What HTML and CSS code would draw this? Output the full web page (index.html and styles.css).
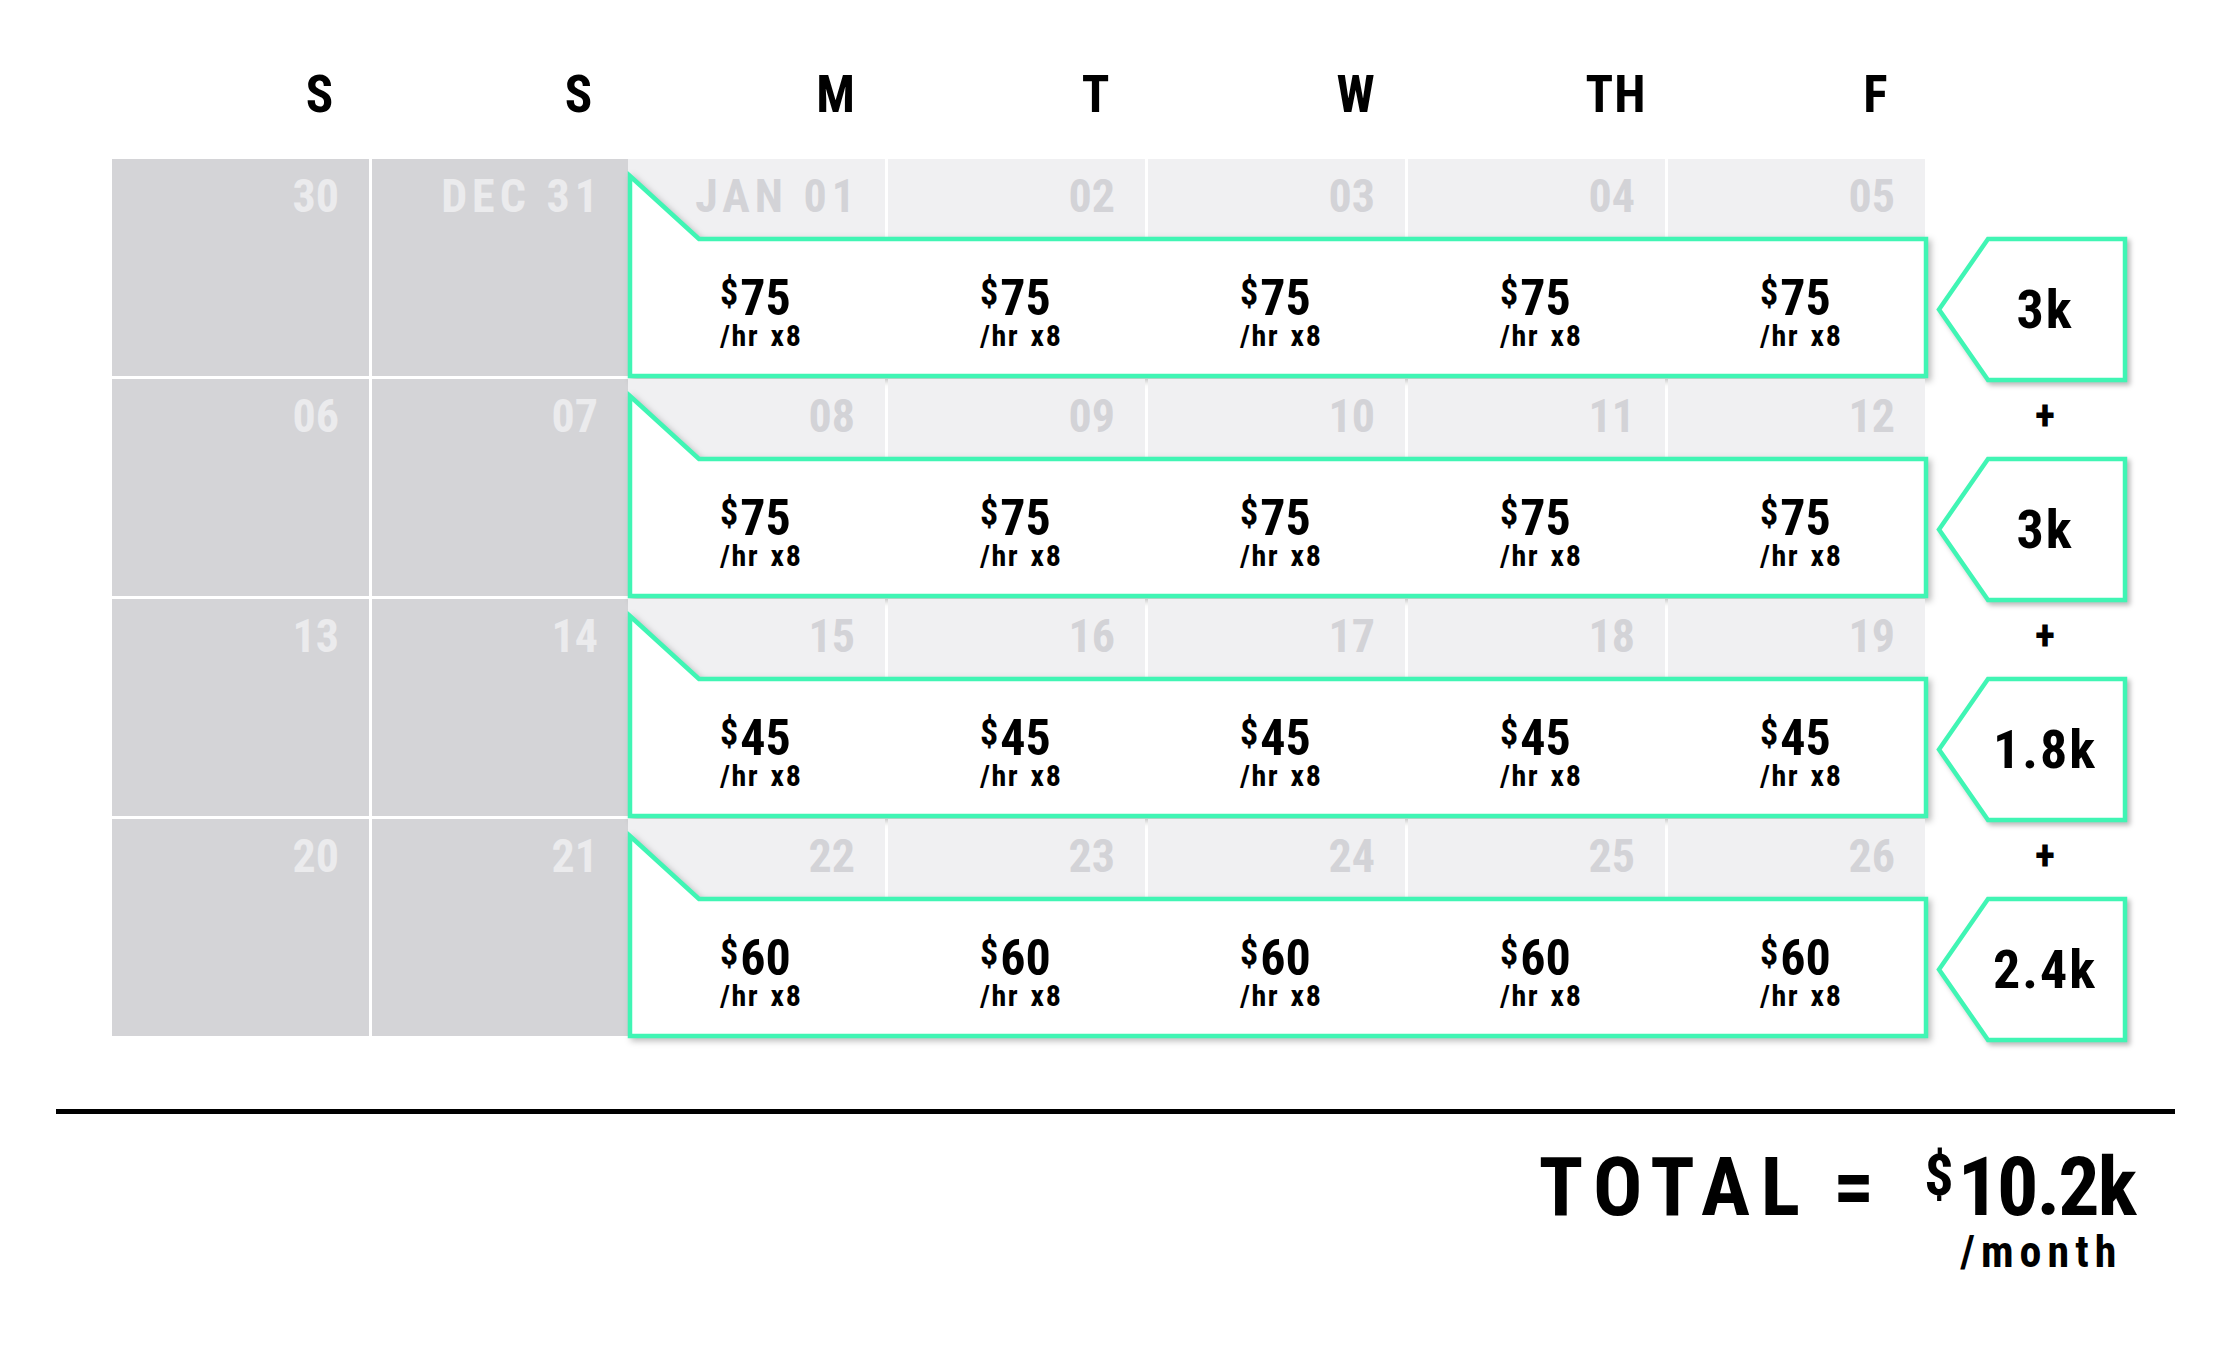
FILE: index.html
```html
<!DOCTYPE html>
<html lang="en">
<head>
<meta charset="utf-8">
<title>Monthly rate calendar</title>
<link rel="stylesheet" href="styles.css">
</head>
<body>
<div class="page">
  <div class="days">
    <div class="day we1"><span>S</span></div>
    <div class="day we2"><span>S</span></div>
    <div class="wk-head">
      <div class="day"><span>M</span></div>
      <div class="day"><span>T</span></div>
      <div class="day"><span>W</span></div>
      <div class="day"><span>TH</span></div>
      <div class="day"><span>F</span></div>
    </div>
  </div>

  <div class="weeks">
    <!-- week 1 -->
    <div class="week">
      <div class="cell weekend we1"><span class="date">30</span></div>
      <div class="cell weekend we2"><span class="date month">DEC 31</span></div>
      <div class="workdays">
        <div class="cell weekday"><span class="date month">JAN 01</span></div>
        <div class="cell weekday"><span class="date">02</span></div>
        <div class="cell weekday"><span class="date">03</span></div>
        <div class="cell weekday"><span class="date">04</span></div>
        <div class="cell weekday"><span class="date">05</span></div>
        <div class="banner">
          <svg class="banner-bg" viewBox="0 0 1300 204" preserveAspectRatio="none"><polygon points="2,2 71,65 1298,65 1298,202 2,202"/></svg>
          <div class="prices">
            <div class="price"><div class="amt"><span class="cur">$</span>75</div><div class="rate">/hr x8</div></div>
            <div class="price"><div class="amt"><span class="cur">$</span>75</div><div class="rate">/hr x8</div></div>
            <div class="price"><div class="amt"><span class="cur">$</span>75</div><div class="rate">/hr x8</div></div>
            <div class="price"><div class="amt"><span class="cur">$</span>75</div><div class="rate">/hr x8</div></div>
            <div class="price"><div class="amt"><span class="cur">$</span>75</div><div class="rate">/hr x8</div></div>
          </div>
        </div>
      </div>
      <div class="sum">
        <div class="plus blank">+</div>
        <div class="tag"><svg class="tag-bg" viewBox="0 0 190 145"><polygon points="2,72.5 51,2 188,2 188,143 51,143"/></svg><span class="tag-val">3k</span></div>
      </div>
    </div>

    <!-- week 2 -->
    <div class="week">
      <div class="cell weekend we1"><span class="date">06</span></div>
      <div class="cell weekend we2"><span class="date">07</span></div>
      <div class="workdays">
        <div class="cell weekday"><span class="date">08</span></div>
        <div class="cell weekday"><span class="date">09</span></div>
        <div class="cell weekday"><span class="date">10</span></div>
        <div class="cell weekday"><span class="date">11</span></div>
        <div class="cell weekday"><span class="date">12</span></div>
        <div class="banner">
          <svg class="banner-bg" viewBox="0 0 1300 204" preserveAspectRatio="none"><polygon points="2,2 71,65 1298,65 1298,202 2,202"/></svg>
          <div class="prices">
            <div class="price"><div class="amt"><span class="cur">$</span>75</div><div class="rate">/hr x8</div></div>
            <div class="price"><div class="amt"><span class="cur">$</span>75</div><div class="rate">/hr x8</div></div>
            <div class="price"><div class="amt"><span class="cur">$</span>75</div><div class="rate">/hr x8</div></div>
            <div class="price"><div class="amt"><span class="cur">$</span>75</div><div class="rate">/hr x8</div></div>
            <div class="price"><div class="amt"><span class="cur">$</span>75</div><div class="rate">/hr x8</div></div>
          </div>
        </div>
      </div>
      <div class="sum">
        <div class="plus">+</div>
        <div class="tag"><svg class="tag-bg" viewBox="0 0 190 145"><polygon points="2,72.5 51,2 188,2 188,143 51,143"/></svg><span class="tag-val">3k</span></div>
      </div>
    </div>

    <!-- week 3 -->
    <div class="week">
      <div class="cell weekend we1"><span class="date">13</span></div>
      <div class="cell weekend we2"><span class="date">14</span></div>
      <div class="workdays">
        <div class="cell weekday"><span class="date">15</span></div>
        <div class="cell weekday"><span class="date">16</span></div>
        <div class="cell weekday"><span class="date">17</span></div>
        <div class="cell weekday"><span class="date">18</span></div>
        <div class="cell weekday"><span class="date">19</span></div>
        <div class="banner">
          <svg class="banner-bg" viewBox="0 0 1300 204" preserveAspectRatio="none"><polygon points="2,2 71,65 1298,65 1298,202 2,202"/></svg>
          <div class="prices">
            <div class="price"><div class="amt"><span class="cur">$</span>45</div><div class="rate">/hr x8</div></div>
            <div class="price"><div class="amt"><span class="cur">$</span>45</div><div class="rate">/hr x8</div></div>
            <div class="price"><div class="amt"><span class="cur">$</span>45</div><div class="rate">/hr x8</div></div>
            <div class="price"><div class="amt"><span class="cur">$</span>45</div><div class="rate">/hr x8</div></div>
            <div class="price"><div class="amt"><span class="cur">$</span>45</div><div class="rate">/hr x8</div></div>
          </div>
        </div>
      </div>
      <div class="sum">
        <div class="plus">+</div>
        <div class="tag"><svg class="tag-bg" viewBox="0 0 190 145"><polygon points="2,72.5 51,2 188,2 188,143 51,143"/></svg><span class="tag-val">1.8k</span></div>
      </div>
    </div>

    <!-- week 4 -->
    <div class="week">
      <div class="cell weekend we1"><span class="date">20</span></div>
      <div class="cell weekend we2"><span class="date">21</span></div>
      <div class="workdays">
        <div class="cell weekday"><span class="date">22</span></div>
        <div class="cell weekday"><span class="date">23</span></div>
        <div class="cell weekday"><span class="date">24</span></div>
        <div class="cell weekday"><span class="date">25</span></div>
        <div class="cell weekday"><span class="date">26</span></div>
        <div class="banner">
          <svg class="banner-bg" viewBox="0 0 1300 204" preserveAspectRatio="none"><polygon points="2,2 71,65 1298,65 1298,202 2,202"/></svg>
          <div class="prices">
            <div class="price"><div class="amt"><span class="cur">$</span>60</div><div class="rate">/hr x8</div></div>
            <div class="price"><div class="amt"><span class="cur">$</span>60</div><div class="rate">/hr x8</div></div>
            <div class="price"><div class="amt"><span class="cur">$</span>60</div><div class="rate">/hr x8</div></div>
            <div class="price"><div class="amt"><span class="cur">$</span>60</div><div class="rate">/hr x8</div></div>
            <div class="price"><div class="amt"><span class="cur">$</span>60</div><div class="rate">/hr x8</div></div>
          </div>
        </div>
      </div>
      <div class="sum">
        <div class="plus">+</div>
        <div class="tag"><svg class="tag-bg" viewBox="0 0 190 145"><polygon points="2,72.5 51,2 188,2 188,143 51,143"/></svg><span class="tag-val">2.4k</span></div>
      </div>
    </div>
  </div>

  <div class="rule"></div>

  <div class="total">
    <span class="total-label">TOTAL</span>
    <span class="total-eq">=</span>
    <div class="total-amt">
      <div class="total-main"><span class="total-cur">$</span><span class="total-num">10.2k</span></div>
      <div class="total-per">/month</div>
    </div>
  </div>
</div>
</body>
</html>
```
FILE: styles.css
```css
* { box-sizing: border-box; }

html, body {
  margin: 0;
  padding: 0;
  background: #ffffff;
}

body {
  font-family: "Roboto Condensed", "Roboto", "Liberation Sans", sans-serif;
  font-weight: 700;
  color: #000;
  width: 2232px;
  height: 1347px;
  overflow: hidden;
}

.page {
  padding-left: 112px;
}

/* ---------- weekday header ---------- */
.days {
  display: flex;
  padding-top: 70px;
  height: 159px;
}

.wk-head {
  display: flex;
  gap: 3px;
  width: 1297px;
}

.day {
  width: 257px;
  height: 50px;
  display: flex;
  justify-content: flex-end;
  font-size: 51px;
  line-height: 50px;
  letter-spacing: 1px;
}

.day span {
  width: 98px;
  text-align: center;
}

.days .we1 { width: 257px; }
.days .we2 { width: 256px; margin-left: 3px; }

/* ---------- calendar weeks ---------- */
.weeks {
  display: flex;
  flex-direction: column;
  gap: 3px;
}

.week {
  display: flex;
  height: 217px;
}

.cell {
  height: 217px;
  padding: 14px 30px 0 0;
  text-align: right;
}

.weekend { background: #d4d4d7; }
.weekend.we1 { width: 257px; }
.weekend.we2 { width: 256px; margin-left: 3px; }

.weekday {
  width: 257px;
  background: #f0f0f2;
}

.date {
  display: inline-block;
  font-size: 46px;
  line-height: 46px;
}

.weekend .date { color: #ebebed; }
.weekday .date { color: #d3d3d7; }

.date.month {
  letter-spacing: 5px;
  margin-right: -5px;
}

.workdays {
  position: relative;
  display: flex;
  gap: 3px;
  width: 1297px;
}

/* ---------- green rate banner ---------- */
.banner {
  position: absolute;
  top: 15px;
  left: 0;
  right: -3px;
  bottom: -2px;
}

.banner-bg {
  position: absolute;
  inset: 0;
  width: 100%;
  height: 100%;
  overflow: visible;
  filter: drop-shadow(3px 3px 3px rgba(0, 0, 0, 0.26));
}

.banner-bg polygon,
.tag-bg polygon {
  fill: #ffffff;
  stroke: #40f5b4;
  stroke-width: 4.5;
  stroke-linejoin: miter;
}

.prices {
  position: relative;
  display: flex;
  gap: 3px;
}

.price {
  width: 257px;
  padding: 99px 0 0 92px;
}

.amt {
  display: flex;
  align-items: flex-start;
  font-size: 50px;
  line-height: 50px;
  height: 50px;
}

.cur {
  font-size: 36px;
  line-height: 36px;
  margin-top: 2px;
  margin-right: 2px;
}

.rate {
  font-size: 30px;
  line-height: 30px;
  margin-top: -2px;
  letter-spacing: 1.5px;
  word-spacing: 3px;
}

/* ---------- weekly sums ---------- */
.sum {
  width: 307px;
  padding: 14px 0 0 12px;
}

.plus {
  width: 190px;
  padding-left: 26px;
  text-align: center;
  font-size: 42px;
  line-height: 46px;
  height: 46px;
}

.plus.blank { visibility: hidden; }

.tag {
  position: relative;
  width: 190px;
  height: 145px;
  margin-top: 18px;
  padding-left: 26px;
  display: flex;
  align-items: center;
  justify-content: center;
}

.tag-bg {
  position: absolute;
  inset: 0;
  width: 190px;
  height: 145px;
  overflow: visible;
  filter: drop-shadow(3px 3px 2.5px rgba(0, 0, 0, 0.28));
}

.tag-val {
  position: relative;
  font-size: 54px;
  line-height: 54px;
  letter-spacing: 2px;
}

/* ---------- total ---------- */
.rule {
  height: 5px;
  background: #000;
  margin: 73px 57px 0 -56px;
}

.total {
  display: flex;
  justify-content: flex-end;
  align-items: flex-start;
  padding-right: 97px;
  margin-top: 32px;
}

.total-label {
  font-size: 82px;
  line-height: 82px;
  letter-spacing: 11px;
}

.total-eq {
  font-size: 82px;
  line-height: 82px;
  margin-left: 22px;
}

.total-amt {
  display: flex;
  flex-direction: column;
  margin-left: 50px;
}

.total-main {
  display: flex;
  align-items: flex-start;
}

.total-cur {
  font-size: 58px;
  line-height: 58px;
  margin-top: 0;
  margin-right: 4px;
}

.total-num {
  font-size: 82px;
  line-height: 82px;
  letter-spacing: -2px;
}

.total-per {
  font-size: 44px;
  line-height: 44px;
  letter-spacing: 6px;
  margin-top: 2px;
  padding-left: 36px;
}
```
